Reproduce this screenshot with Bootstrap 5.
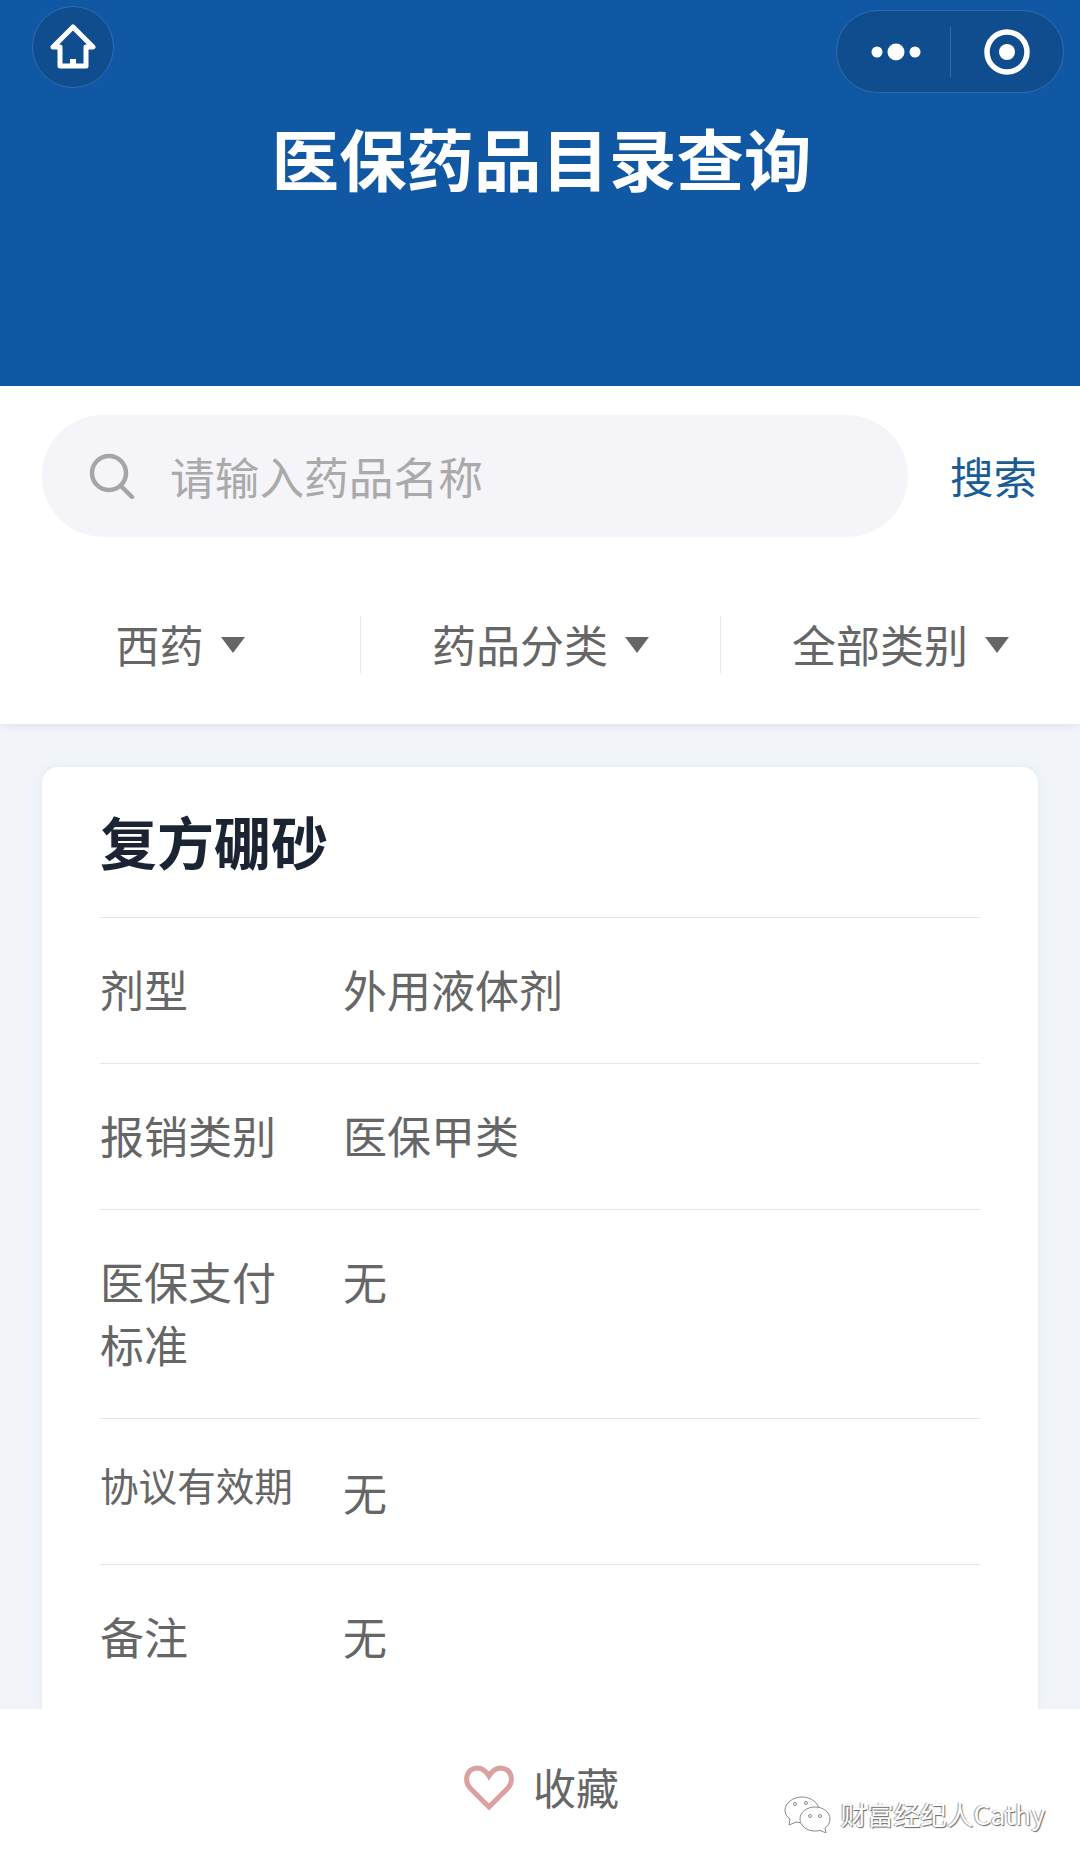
<!DOCTYPE html>
<html lang="zh-CN">
<head>
  <meta charset="UTF-8">
  <meta name="viewport" content="width=device-width, initial-scale=1">
  <title>医保药品目录查询</title>
  <link href="https://cdn.jsdelivr.net/npm/bootstrap@5.3.3/dist/css/bootstrap.min.css" rel="stylesheet">
  <style>
    body { background: #f1f5fa; font-family: "Noto Sans CJK SC", "Liberation Sans", sans-serif; color: #666; }
    .page-wrap { width: 1080px; height: 1868px; overflow: hidden; position: relative; }

    .top-head { height: 386px; background: #1158a4; padding: 6px 16px 0 32px; }
    .home-btn { width: 82px; height: 82px; background: #0f4d8f; border: 1px solid #2f6db0; }
    .capsule { width: 228px; height: 83px; margin-top: 4px; background: #0f4d8f; border: 1px solid #2f6db0; }
    .capsule-part { width: 114px; height: 50px; }
    .capsule-part + .capsule-part { border-left: 1px solid #2f6db0; }
    .capsule-dots { margin-left: 4px; }
    .head-title { margin: 24px 0 0 -13px; font-size: 67.5px; line-height: 80px; font-weight: 700; color: #fff; }

    .search-area { height: 151px; background: #fff; padding: 29px 43px 0 42px; }
    .search-box { width: 866px; height: 122px; background: #f5f4f8; padding-left: 47px; }
    .search-hint { margin-left: 35px; font-size: 44.7px; line-height: 60px; color: #aaa; }
    .search-link { font-size: 43.5px; line-height: 122px; color: #1a5d96; }

    .filter-area { background: #fff; padding: 79px 0 51px; box-shadow: 0 6px 6px -3px rgba(120, 140, 170, .14); position: relative; }
    .filter-item { height: 57px; font-size: 44px; line-height: 57px; color: #666; }
    .filter-item + .filter-item { border-left: 1px solid #e8e8ea; }
    .filter-caret { width: 0; height: 0; margin-left: 17px; margin-top: 1px; border-left: 12px solid transparent; border-right: 12px solid transparent; border-top: 16px solid #666; }

    .list-area { padding: 43px 42px 0; }
    .drug-card { height: 960px; border: 0; border-radius: 16px; padding: 0 58px; box-shadow: 0 0 10px rgba(120, 140, 170, .1); }
    .drug-title { height: 150px; margin: 0; font-size: 57px; line-height: 146px; font-weight: 700; color: #1a2433; }
    .drug-row { padding: 40px 0 42px; border-top: 1px solid #e6e6e8; font-size: 44px; line-height: 63px; }
    .drug-label { width: 243px; padding-right: 50px; flex-shrink: 0; }
    .label-small { font-size: 38.6px; line-height: 50px; }
    .value-low { padding-top: 2px; margin-bottom: -2px; }

    .bottom-bar { position: absolute; left: 0; right: 0; bottom: 0; height: 159px; background: #fff; padding: 51px 0 0 464px; }
    .heart-icon { margin-top: 5px; }
    .fav-text { margin: -3px 0 0 19px; font-size: 43px; line-height: 58px; color: #666; }
    .mp-mark { position: absolute; right: 35px; bottom: 35px; font-size: 26.6px; line-height: 38px; color: #fff; text-shadow: 1px 1px 1px #666, -1px 0 1px #999; }
  </style>
</head>
<body>
  <div class="page-wrap">

    <!-- Cabecalho -->
    <header class="top-head">
      <div class="d-flex justify-content-between align-items-start">
        <div class="home-btn rounded-circle d-flex align-items-center justify-content-center">
          <svg width="46" height="46" viewBox="0 0 46 46" fill="none" stroke="#fff" stroke-width="5" stroke-linejoin="round" stroke-linecap="round">
            <path d="M3 23 23 3l20 20h-7v19H10V23z"/>
            <path d="M23 42v-7" stroke-width="6" stroke-linecap="butt"/>
          </svg>
        </div>
        <div class="capsule rounded-pill d-flex align-items-center">
          <div class="capsule-part d-flex align-items-center justify-content-center">
            <svg class="capsule-dots" width="50" height="20" viewBox="0 0 50 20" fill="#fff">
              <circle cx="6" cy="10" r="5.5"/>
              <circle cx="25" cy="10" r="8.5"/>
              <circle cx="44" cy="10" r="5.5"/>
            </svg>
          </div>
          <div class="capsule-part d-flex align-items-center justify-content-center">
            <svg width="46" height="46" viewBox="0 0 46 46">
              <circle cx="23" cy="23" r="20" fill="none" stroke="#fff" stroke-width="5.5"/>
              <circle cx="23" cy="23" r="8" fill="#fff"/>
            </svg>
          </div>
        </div>
      </div>
      <h1 class="head-title text-center">医保药品目录查询</h1>
    </header>

    <!-- Busca -->
    <div class="search-area d-flex justify-content-between align-items-start">
      <div class="search-box rounded-pill d-flex align-items-center">
        <svg width="46" height="46" viewBox="0 0 46 46" fill="none" stroke="#a5a5a5" stroke-width="4.5" stroke-linecap="round">
          <circle cx="20" cy="20" r="17"/>
          <path d="M32 33l11 11"/>
        </svg>
        <span class="search-hint">请输入药品名称</span>
      </div>
      <div class="search-link">搜索</div>
    </div>

    <!-- Filtros -->
    <div class="filter-area row g-0">
      <div class="col-4 filter-item d-flex align-items-center justify-content-center">西药<span class="filter-caret"></span></div>
      <div class="col-4 filter-item d-flex align-items-center justify-content-center">药品分类<span class="filter-caret"></span></div>
      <div class="col-4 filter-item d-flex align-items-center justify-content-center">全部类别<span class="filter-caret"></span></div>
    </div>

    <!-- Detalhe -->
    <main class="list-area">
      <div class="card drug-card">
        <h2 class="drug-title">复方硼砂</h2>
        <div class="drug-row d-flex"><div class="drug-label">剂型</div><div>外用液体剂</div></div>
        <div class="drug-row d-flex"><div class="drug-label">报销类别</div><div>医保甲类</div></div>
        <div class="drug-row d-flex"><div class="drug-label">医保支付标准</div><div>无</div></div>
        <div class="drug-row d-flex"><div class="drug-label label-small">协议有效期</div><div class="value-low">无</div></div>
        <div class="drug-row d-flex"><div class="drug-label">备注</div><div>无</div></div>
      </div>
    </main>

    <!-- Rodape -->
    <footer class="bottom-bar d-flex align-items-start">
      <svg class="heart-icon" width="50" height="46" viewBox="0 0 50 46" fill="none" stroke="#dba0a0" stroke-width="5" stroke-linejoin="miter">
        <path d="M25 42 6 23C0 16 2 4 13 3c5 0 9 3 12 8 3-5 7-8 12-8 11 1 13 13 7 20z"/>
      </svg>
      <span class="fav-text">收藏</span>
    </footer>

    <!-- Marca d'agua sobre o rodape -->
    <div class="mp-mark d-flex align-items-center gap-2">
      <svg width="48" height="38" viewBox="0 0 48 38" fill="#fff" stroke="#8a8a8a" stroke-width="1">
        <path d="M18 2C9 2 1 8 1 15c0 4 2 7 5 9l-1 6 7-3c2 .5 4 .7 6 .7C27 28 35 22 35 15S27 2 18 2z"/>
        <path d="M31 12c-8 0-15 5-15 12s7 12 15 12c2 0 3 0 5-.6l6 2.6-1-5c3-2 5-5 5-9 0-7-7-12-15-12z"/>
        <circle cx="26" cy="21" r="1.5"/>
        <circle cx="36" cy="21" r="1.5"/>
        <circle cx="11" cy="9" r="1.5"/>
        <circle cx="22" cy="8" r="1.5"/>
      </svg>
      <span>财富经纪人Cathy</span>
    </div>
  </div>

  <script src="https://cdn.jsdelivr.net/npm/bootstrap@5.3.3/dist/js/bootstrap.bundle.min.js"></script>
</body>
</html>
